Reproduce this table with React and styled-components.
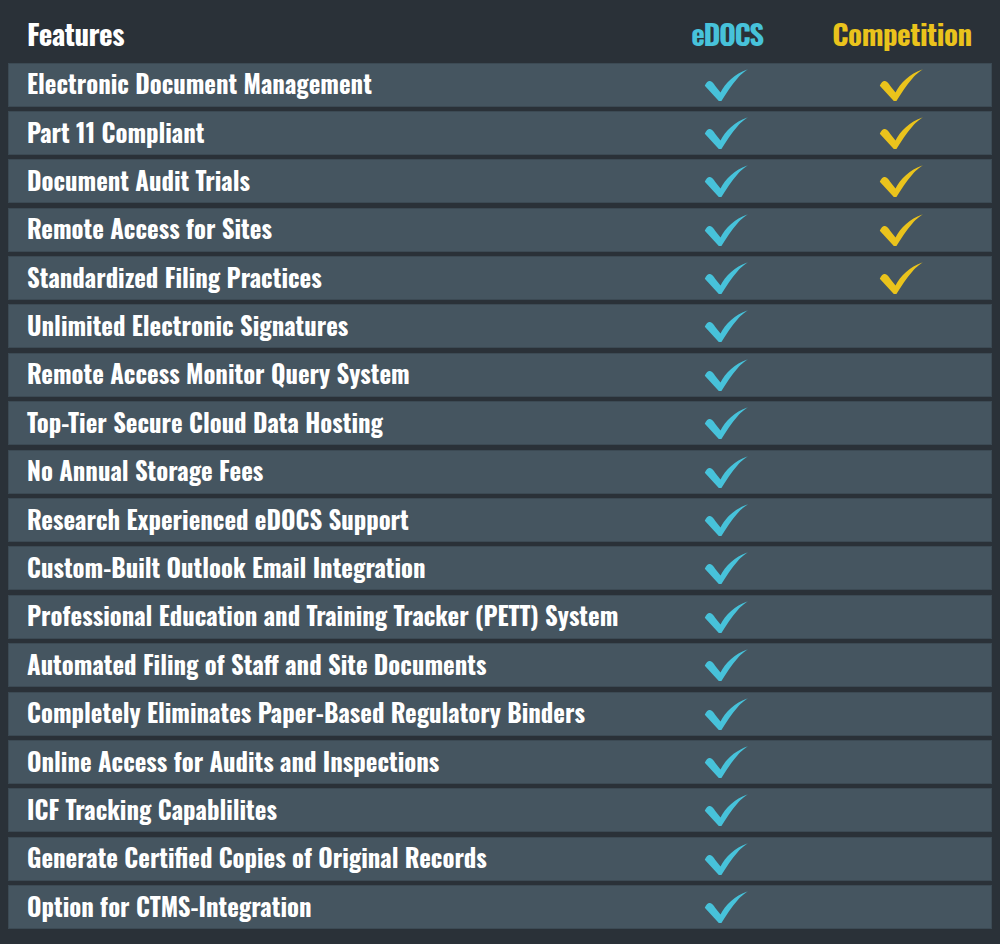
import React from "react";
import styled, { createGlobalStyle } from "styled-components";

const GlobalStyle = createGlobalStyle`
  html, body {
    margin: 0;
    padding: 0;
    background: #2a3138;
  }
  body {
    font-family: "Oswald", "Roboto Condensed", "Liberation Sans", sans-serif;
    color: #ffffff;
  }
`;

const colors = {
  edocs: "#47c2da",
  competition: "#eac31c",
};

const features = [
  ["Electronic Document Management", true],
  ["Part 11 Compliant", true],
  ["Document Audit Trials", true],
  ["Remote Access for Sites", true],
  ["Standardized Filing Practices", true],
  ["Unlimited Electronic Signatures", false],
  ["Remote Access Monitor Query System", false],
  ["Top-Tier Secure Cloud Data Hosting", false],
  ["No Annual Storage Fees", false],
  ["Research Experienced eDOCS Support", false],
  ["Custom-Built Outlook Email Integration", false],
  ["Professional Education and Training Tracker (PETT) System", false],
  ["Automated Filing of Staff and Site Documents", false],
  ["Completely Eliminates Paper-Based Regulatory Binders", false],
  ["Online Access for Audits and Inspections", false],
  ["ICF Tracking Capablilites", false],
  ["Generate Certified Copies of Original Records", false],
  ["Option for CTMS-Integration", false],
];

const Page = styled.div`
  width: 1000px;
  height: 944px;
  box-sizing: border-box;
  padding: 0 8px;
  display: flex;
  flex-direction: column;
`;

const Header = styled.div`
  display: grid;
  grid-template-columns: 1fr 170px 180px;
  align-items: center;
  height: 62px;
  padding-left: 19px;
  padding-top: 3px;
  box-sizing: border-box;
`;

const HeadTitle = styled.div`
  font-size: 29px;
  font-weight: 700;
  letter-spacing: ${(p) => p.spacing || "-0.5px"};
  color: ${(p) => p.color || "#ffffff"};
  text-align: ${(p) => (p.center ? "center" : "left")};
  line-height: 1;
`;

const Table = styled.div`
  display: flex;
  flex-direction: column;
  gap: 4.4px;
  padding-top: 0.5px;
`;

const Row = styled.div`
  display: grid;
  grid-template-columns: 1fr 170px 180px;
  align-items: center;
  height: 44px;
  box-sizing: border-box;
  padding-left: 18px;
  background: #455560;
  border: 1px solid #3c4a54;
`;

const Label = styled.div`
  font-size: 24.75px;
  font-weight: 700;
  color: #ffffff;
  white-space: nowrap;
  line-height: 1;
  padding-bottom: 2px;
`;

const Cell = styled.div`
  display: flex;
  justify-content: center;
  align-items: center;
  height: 100%;
`;

const Check = ({ color }) => (
  <svg width="44" height="34" viewBox="0 0 44 34">
    <path
      fill={color}
      d="M0.8 17.8 C2.2 14.6 4 12.8 6 13.1 C7.8 13.5 9.5 15.4 11.3 17.9 L16.5 24.4 C21.5 15 30 6 44 1.2 C42 2.6 37.5 5.6 33.6 10.2 C27.6 16.8 22.2 25.2 17.4 33 L14.8 33 Z"
    />
  </svg>
);

export default function App() {
  return (
    <>
      <GlobalStyle />
      <Page>
        <Header>
          <HeadTitle>Features</HeadTitle>
          <HeadTitle center color={colors.edocs} spacing="-1.5px">
            eDOCS
          </HeadTitle>
          <HeadTitle center color={colors.competition}>
            Competition
          </HeadTitle>
        </Header>
        <Table>
          {features.map(([name, comp]) => (
            <Row key={name}>
              <Label>{name}</Label>
              <Cell>
                <Check color={colors.edocs} />
              </Cell>
              <Cell>{comp && <Check color={colors.competition} />}</Cell>
            </Row>
          ))}
        </Table>
      </Page>
    </>
  );
}
